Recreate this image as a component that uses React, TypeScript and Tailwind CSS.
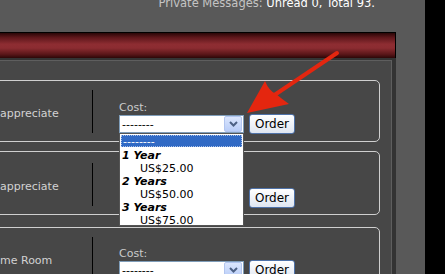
import React from 'react';

const font = { fontFamily: '"DejaVu Sans", Verdana, sans-serif' };

const Chevron = () => (
  <svg width="9" height="6" viewBox="0 0 9 6">
    <path d="M1 1 L4.5 4.5 L8 1" fill="none" stroke="#4d6185" strokeWidth="2" />
  </svg>
);

const Select: React.FC<{ open?: boolean }> = ({ open = false }) => (
  <div className="relative w-[125px] h-[18px] bg-white border border-[#7f9db9] flex items-center">
    <span className="pl-[2px] text-[11px] leading-[13px] text-black flex-1">--------</span>
    <div className="w-[18px] h-[16px] mr-px bg-gradient-to-b from-[#dbe6fd] to-[#b9cdf8] border border-[#b2c5ef] rounded-[2px] flex items-center justify-center">
      <Chevron />
    </div>
    {open && (
      <div className="absolute left-[-1px] top-[17px] w-[125px] h-[93px] bg-white border border-[#555] z-10 text-[11px] leading-[13px] text-black">
        <div className="h-[12px] mx-px mt-px bg-[#316ac5] text-white leading-[12px] pl-px border border-dotted border-[#a8c0e8]">--------</div>
        <div className="pl-[2px] mt-[2px] font-bold italic">1 Year</div>
        <div className="pl-[20px]">US$25.00</div>
        <div className="pl-[2px] font-bold italic">2 Years</div>
        <div className="pl-[20px]">US$50.00</div>
        <div className="pl-[2px] font-bold italic">3 Years</div>
        <div className="pl-[20px]">US$75.00</div>
      </div>
    )}
  </div>
);

const OrderButton = () => (
  <button className="ml-[5px] w-[46px] h-[20px] rounded-[3px] border border-[#4f72a8] bg-gradient-to-b from-white to-[#dfe6f1] text-[12px] leading-[14px] text-black">
    Order
  </button>
);

interface BoxProps {
  label: string;
  open?: boolean;
  boxClass: string;
  labelClass: string;
  dividerClass: string;
  rightClass: string;
}

const OfferBox: React.FC<BoxProps> = ({ label, open, boxClass, labelClass, dividerClass, rightClass }) => (
  <div className={`shrink-0 ml-[-10px] w-[390px] rounded-[5px] border border-[#cfcfcf] flex items-start ${boxClass}`}>
    <div className={`w-[101px] pl-[9px] text-[11px] leading-[13px] text-[#d2d2d2] whitespace-nowrap ${labelClass}`}>
      {label}
    </div>
    <div className={`w-px h-[43px] bg-black ${dividerClass}`} />
    <div className={`pl-[26px] flex flex-col ${rightClass}`}>
      <div className="text-[11px] leading-[13px] text-[#cbcbcb]">Cost:</div>
      <div className="flex items-center">
        <Select open={open} />
        <OrderButton />
      </div>
    </div>
  </div>
);

export default function App() {
  return (
    <div className="relative w-[445px] h-[274px] bg-black flex overflow-hidden" style={font}>
      <div className="w-[425px] h-full bg-[#595959] flex flex-col">
        <div className="h-[32px] shrink-0 flex justify-end pr-[50px]">
          <div className="mt-[-3px] text-[11.5px] leading-[13px] whitespace-nowrap">
            <span className="text-[#c4c4c4]">Private Messages: </span>
            <span className="text-white">Unread 0, Total 93.</span>
          </div>
        </div>
        <div className="w-[396px] flex-1 min-h-0 flex flex-col">
          <div className="h-[26px] shrink-0 border-t border-r border-black bg-[linear-gradient(to_bottom,#2a0607_0%,#5e171b_18%,#8e2d32_45%,#8c2c31_60%,#5a1619_85%,#2c0708_100%)]" />
          <div className="flex-1 min-h-0 bg-[#333333] pt-[2px] pr-[4px]">
            <div className="h-full bg-[#474747] border-t border-r border-[#5e5e5e] pt-[19px] flex flex-col">
              <OfferBox
                label="appreciate"
                open
                boxClass="h-[62px]"
                labelClass="mt-[26px]"
                dividerClass="mt-[9px]"
                rightClass="mt-[20px]"
              />
              <OfferBox
                label="appreciate"
                boxClass="h-[64px] mt-[9px]"
                labelClass="mt-[28px]"
                dividerClass="mt-[11px]"
                rightClass="mt-[23px]"
              />
              <OfferBox
                label="me Room"
                boxClass="h-[64px] mt-[12px]"
                labelClass="mt-[26px]"
                dividerClass="mt-[9px]"
                rightClass="mt-[19px]"
              />
            </div>
          </div>
        </div>
      </div>
      <svg className="absolute left-0 top-0 pointer-events-none z-20" width="445" height="274" viewBox="0 0 445 274">
        <line x1="337" y1="53" x2="270" y2="98" stroke="#e4260f" strokeWidth="4" strokeLinecap="round" />
        <path d="M247 113 L265 81 Q269 91 276 94 Q282 99 289 104 Z" fill="#e4260f" />
      </svg>
    </div>
  );
}
